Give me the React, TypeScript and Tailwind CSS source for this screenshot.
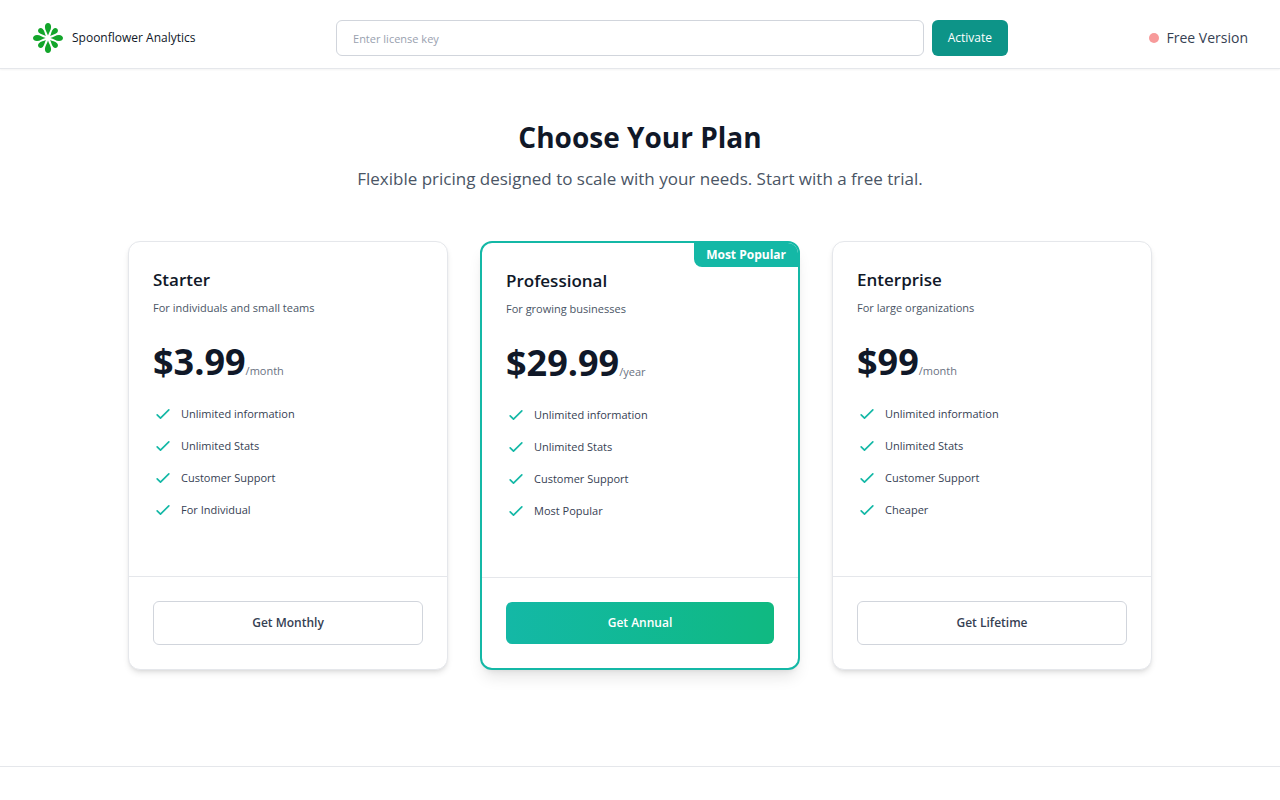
import React from "react";

const plans = [
  {
    name: "Starter",
    description: "For individuals and small teams",
    price: "$3.99",
    period: "/month",
    features: [
      "Unlimited information",
      "Unlimited Stats",
      "Customer Support",
      "For Individual",
    ],
    button: "Get Monthly",
    popular: false,
  },
  {
    name: "Professional",
    description: "For growing businesses",
    price: "$29.99",
    period: "/year",
    features: [
      "Unlimited information",
      "Unlimited Stats",
      "Customer Support",
      "Most Popular",
    ],
    button: "Get Annual",
    popular: true,
  },
  {
    name: "Enterprise",
    description: "For large organizations",
    price: "$99",
    period: "/month",
    features: [
      "Unlimited information",
      "Unlimited Stats",
      "Customer Support",
      "Cheaper",
    ],
    button: "Get Lifetime",
    popular: false,
  },
];

const Logo = () => {
  return (
    <svg className="size-8" viewBox="-16 -16 32 32" fill="#13a52b">
      {[0, 90, 180, 270].map((angle) => (
        <g key={angle} transform={`rotate(${angle})`}>
          <path d="M0 -2.4C-0.8 -5.4 -3.1 -8 -3.1 -11C-3.1 -13.4 -1.7 -15 0 -15C1.7 -15 3.1 -13.4 3.1 -11C3.1 -8 0.8 -5.4 0 -2.4Z" />
          <path
            transform="rotate(45)"
            d="M0 -3C-0.7 -5.4 -2.7 -7.4 -2.7 -10.1C-2.7 -11.8 -1.5 -13 0 -13C1.5 -13 2.7 -11.8 2.7 -10.1C2.7 -7.4 0.7 -5.4 0 -3Z"
          />
        </g>
      ))}
    </svg>
  );
};

const CheckIcon = () => {
  return (
    <svg
      className="size-5 shrink-0 text-[#14b8a6]"
      viewBox="0 0 24 24"
      fill="none"
      stroke="currentColor"
      strokeWidth={2}
      strokeLinecap="round"
      strokeLinejoin="round"
    >
      <path d="M5 13l4 4L19 7" />
    </svg>
  );
};

const Header = () => {
  return (
    <header className="flex items-center justify-between border-b border-gray-200 bg-white px-8 pt-5 pb-3 shadow-[0_1px_2px_rgba(0,0,0,0.05)]">
      <div className="flex items-center">
        <Logo />
        <span className="ml-2 text-[12px] leading-5 font-medium text-gray-900">
          Spoonflower Analytics
        </span>
      </div>
      <form className="flex w-full max-w-2xl items-center gap-2">
        <input
          type="text"
          aria-label="License key"
          placeholder="Enter license key"
          className="h-9 min-w-0 flex-1 rounded-md border border-gray-300 px-4 text-[11px] leading-5 placeholder:text-gray-400"
        />
        <button
          type="button"
          className="h-9 rounded-md bg-[#0d9488] px-4 text-[12px] leading-5 font-medium text-white"
        >
          Activate
        </button>
      </form>
      <div className="flex items-center">
        <span className="size-2.5 rounded-full bg-[#f79a9a]" />
        <span className="ml-2 text-[14px] leading-5 font-medium text-gray-700">
          Free Version
        </span>
      </div>
    </header>
  );
};

const PlanCard = ({ plan }: any) => {
  return (
    <div
      className={
        plan.popular
          ? "relative flex flex-col overflow-hidden rounded-xl border-2 border-[#14b8a6] bg-white shadow-lg"
          : "relative flex flex-col overflow-hidden rounded-xl border border-gray-200 bg-white shadow-md"
      }
    >
      {plan.popular && (
        <div className="absolute top-0 right-0 rounded-bl-lg bg-[#14b8a6] px-3 py-1 text-[12px] leading-4 font-bold text-white">
          Most Popular
        </div>
      )}
      <div className="flex-1 p-6 pb-14">
        <h3 className="text-[17px] leading-7 font-semibold text-gray-900">
          {plan.name}
        </h3>
        <p className="mt-1 text-[11px] leading-5 text-gray-600">
          {plan.description}
        </p>
        <div className="mt-6 flex items-baseline">
          <span className="text-[36px] leading-10 font-bold text-gray-900">
            {plan.price}
          </span>
          <span className="text-[11px] leading-4 text-gray-500">
            {plan.period}
          </span>
        </div>
        <ul className="mt-[22px] space-y-3">
          {plan.features.map((feature: string) => (
            <li key={feature} className="flex items-center">
              <CheckIcon />
              <span className="ml-2 text-[11px] leading-5 text-gray-700">
                {feature}
              </span>
            </li>
          ))}
        </ul>
      </div>
      <div className="border-t border-gray-200 p-6">
        <button
          type="button"
          className={
            plan.popular
              ? "w-full rounded-md bg-linear-to-r from-[#14b8a6] to-[#10b981] py-[11px] text-[12px] leading-5 font-semibold text-white"
              : "w-full rounded-md border border-gray-300 bg-white py-[11px] text-[12px] leading-5 font-semibold text-gray-700"
          }
        >
          {plan.button}
        </button>
      </div>
    </div>
  );
};

const App = () => {
  return (
    <div className="min-h-screen bg-white font-['Open_Sans','Noto_Sans',sans-serif]">
      <Header />
      <main className="mx-auto max-w-5xl py-12">
        <div className="text-center">
          <h1 className="text-[28px] leading-10 font-bold text-gray-900">
            Choose Your Plan
          </h1>
          <p className="mt-2 text-[17px] leading-7 text-gray-600">
            Flexible pricing designed to scale with your needs. Start with a
            free trial.
          </p>
        </div>
        <div className="my-12 grid grid-cols-3 gap-8">
          {plans.map((plan) => (
            <PlanCard key={plan.name} plan={plan} />
          ))}
        </div>
      </main>
      <footer className="border-t border-gray-200 bg-white" />
    </div>
  );
};

export default App;
